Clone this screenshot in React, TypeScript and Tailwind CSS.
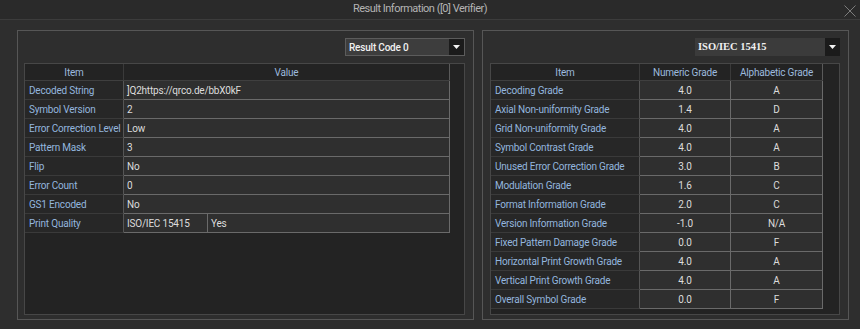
import React from "react";

const leftRows: [string, string][] = [
  ["Decoded String", "]Q2https://qrco.de/bbX0kF"],
  ["Symbol Version", "2"],
  ["Error Correction Level", "Low"],
  ["Pattern Mask", "3"],
  ["Flip", "No"],
  ["Error Count", "0"],
  ["GS1 Encoded", "No"],
];

const gradeRows: [string, string, string][] = [
  ["Decoding Grade", "4.0", "A"],
  ["Axial Non-uniformity Grade", "1.4", "D"],
  ["Grid Non-uniformity Grade", "4.0", "A"],
  ["Symbol Contrast Grade", "4.0", "A"],
  ["Unused Error Correction Grade", "3.0", "B"],
  ["Modulation Grade", "1.6", "C"],
  ["Format Information Grade", "2.0", "C"],
  ["Version Information Grade", "-1.0", "N/A"],
  ["Fixed Pattern Damage Grade", "0.0", "F"],
  ["Horizontal Print Growth Grade", "4.0", "A"],
  ["Vertical Print Growth Grade", "4.0", "A"],
  ["Overall Symbol Grade", "0.0", "F"],
];

function Arrow() {
  return (
    <div className="flex w-[15px] items-center justify-center bg-[#1b1b1b]">
      <svg width="7" height="4" viewBox="0 0 7 4">
        <polygon points="0,0 7,0 3.5,4" fill="#f2f2f2" />
      </svg>
    </div>
  );
}

const itemCell =
  "flex items-center border-r border-b border-r-[#555555] border-b-[#3a3a3a] bg-[#272727] pl-[4px] text-[#93b6df]";
const valueCell =
  "flex items-center border-r border-b border-[#6a6a6a] bg-[#2f2f2f] text-[#dcdcdc]";

export default function App() {
  return (
    <div className="flex h-[329px] w-[860px] flex-col bg-[#2e2e2e] font-['Roboto',sans-serif] text-[10px] tracking-[-0.2px]">
      {/* title bar */}
      <div className="relative flex h-[20px] items-center justify-center border-b border-[#3c3c3c] bg-[#2a2a2a] pr-[20px]">
        <span className="text-[11px] tracking-[-0.5px] text-[#b4b4b4]">Result Information ([0] Verifier)</span>
        <svg className="absolute right-[4px] top-[5px]" width="12" height="12" viewBox="0 0 12 12">
          <path d="M0.5 0.5 L11.5 11.5 M11.5 0.5 L0.5 11.5" stroke="#7c7c7c" strokeWidth="1" />
        </svg>
      </div>

      <div className="flex pl-[17px] pt-[10px] gap-[8px]">
        {/* left panel */}
        <div className="flex h-[290px] w-[457px] flex-col border border-[#565656] pb-[4px] pl-[6px] pr-[8px] pt-[7px]">
          <div className="flex justify-end">
            <div className="flex h-[18px] w-[120px] border border-[#5c5c5c] bg-[#3d3d3d]">
              <div className="flex flex-1 items-center pl-[3px] font-medium text-[#f0f0f0]">Result Code 0</div>
              <Arrow />
            </div>
          </div>
          <div className="mt-[7px] flex flex-1 flex-col border border-[#474747] bg-[#232323]">
            <div className="flex h-[17px] w-[425px] border-b border-[#3f3f3f] text-[#9cbade]">
              <div className="flex w-[99px] items-center justify-center border-r border-[#3a3a3a]">Item</div>
              <div className="flex w-[326px] items-center justify-center border-r border-[#5a5a5a]">Value</div>
            </div>
            {leftRows.map(([k, v]) => (
              <div key={k} className="flex h-[19px] w-[425px]">
                <div className={`${itemCell} w-[99px]`}>{k}</div>
                <div className={`${valueCell} w-[326px] pl-[3px]`}>{v}</div>
              </div>
            ))}
            <div className="flex h-[19px] w-[425px]">
              <div className={`${itemCell} w-[99px]`}>Print Quality</div>
              <div className={`${valueCell} w-[84px] pl-[3px]`}>ISO/IEC 15415</div>
              <div className={`${valueCell} w-[242px] pl-[3px]`}>Yes</div>
            </div>
          </div>
        </div>

        {/* right panel */}
        <div className="flex h-[290px] w-[367px] flex-col border border-[#565656] pb-[4px] pl-[7px] pr-[8px] pt-[7px]">
          <div className="flex justify-end">
            <div className="flex h-[18px] w-[145px] bg-[#3b3b3b]">
              <div className="flex flex-1 items-center pl-[3px] font-['Liberation_Serif',serif] text-[10.5px] font-bold tracking-normal text-[#f0f0f0]">
                ISO/IEC 15415
              </div>
              <Arrow />
            </div>
          </div>
          <div className="mt-[7px] flex flex-1 flex-col border border-[#474747] bg-[#232323]">
            <div className="flex h-[17px] w-[332px] border-b border-[#3f3f3f] text-[#9cbade]">
              <div className="flex w-[149px] items-center justify-center border-r border-[#3a3a3a]">Item</div>
              <div className="flex w-[91px] items-center justify-center border-r border-[#3a3a3a]">Numeric Grade</div>
              <div className="flex w-[92px] items-center justify-center border-r border-[#5a5a5a]">Alphabetic Grade</div>
            </div>
            {gradeRows.map(([k, n, a]) => (
              <div key={k} className="flex h-[19px] w-[332px]">
                <div className={`${itemCell} w-[149px]`}>{k}</div>
                <div className={`${valueCell} w-[91px] justify-center`}>{n}</div>
                <div className={`${valueCell} w-[92px] justify-center`}>{a}</div>
              </div>
            ))}
          </div>
        </div>
      </div>
    </div>
  );
}
